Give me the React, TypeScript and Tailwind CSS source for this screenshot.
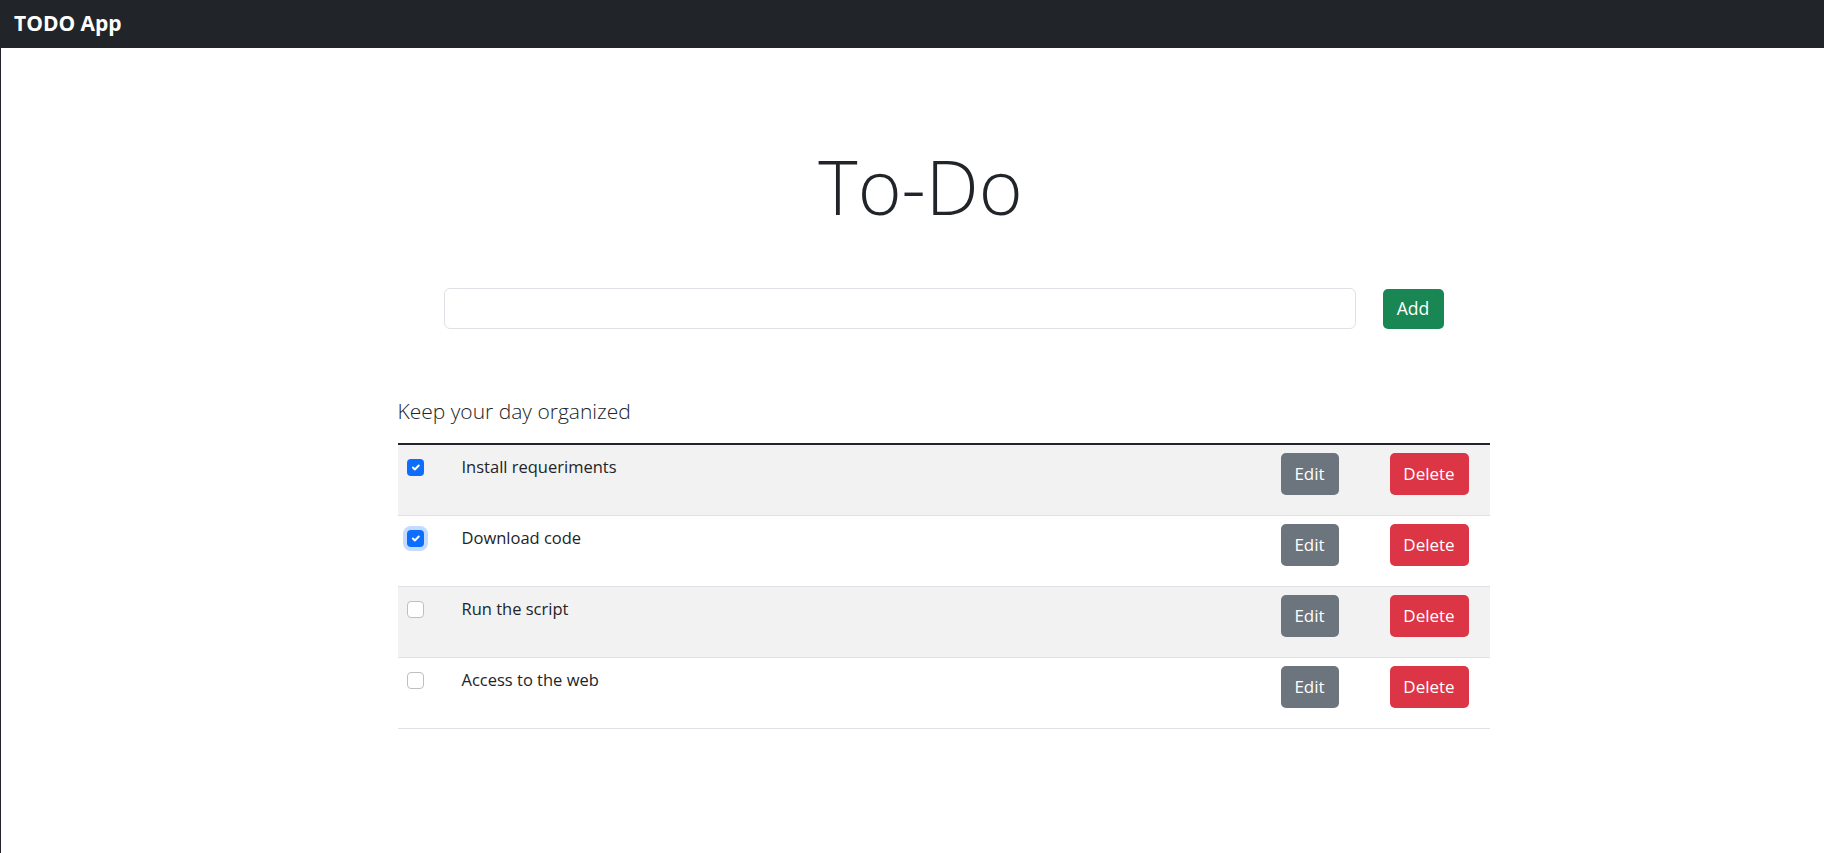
import { useState } from "react";

type Task = { id: number; text: string; done: boolean; focused?: boolean };

const initialTasks: Task[] = [
  { id: 1, text: "Install requeriments", done: true },
  { id: 2, text: "Download code", done: true, focused: true },
  { id: 3, text: "Run the script", done: false },
  { id: 4, text: "Access to the web", done: false },
];

function Check({ checked, focused }: { checked: boolean; focused?: boolean }) {
  if (checked) {
    return (
      <span
        className={
          "mt-[6px] flex h-[17px] w-[17px] items-center justify-center rounded-[4px] bg-[#0d6efd] " +
          (focused ? "shadow-[0_0_0_4px_rgba(13,110,253,0.25)]" : "")
        }
      >
        <svg viewBox="0 0 20 20" className="h-[13px] w-[13px]">
          <path d="M6 10l3 3l6-6" fill="none" stroke="#fff" strokeWidth="3" strokeLinecap="round" strokeLinejoin="round" />
        </svg>
      </span>
    );
  }
  return <span className="mt-[6px] block h-[17px] w-[17px] rounded-[4px] border border-[#bfbfbf] bg-white" />;
}

export default function App() {
  const [tasks] = useState(initialTasks);

  return (
    <div
      className="min-h-screen border-l border-[#212529] bg-white text-[#212529]"
      style={{ fontFamily: '"Open Sans", "Noto Sans", sans-serif' }}
    >
      <nav className="flex h-[48px] items-center bg-[#212529] px-[13px]">
        <span className="text-[21px] font-bold text-white">TODO App</span>
      </nav>

      <div className="flex justify-center pl-[16px] pt-[88px]">
        <h1 className="text-[75px] font-light leading-[100px]">To-Do</h1>
      </div>

      <div className="flex justify-center pl-[62px]">
        <div className="w-[1092px]">
          <div className="mt-[52px] flex items-center gap-[27px] px-[46px]">
            <input className="h-[41px] flex-1 rounded-[6px] border border-[#dee2e6] px-3 outline-none" />
            <button className="h-[40px] w-[61px] rounded-[5px] bg-[#198754] text-[17.6px] text-white">Add</button>
          </div>

          <p className="mt-[67px] text-[21px] font-light leading-[30px] text-[#212529]">Keep your day organized</p>

          <div className="mt-[17px] border-t-2 border-[#212529]">
            {tasks.map((t, i) => (
              <div
                key={t.id}
                className={
                  "grid h-[71px] grid-cols-[64px_1fr_109px_100px] items-start border-b border-[#dee2e6] pt-[8px] " +
                  (i % 2 === 0 ? "bg-[#f2f2f2]" : "bg-white")
                }
              >
                <div className="pl-[9px]">
                  <Check checked={t.done} focused={t.focused} />
                </div>
                <div className="pt-[1px] text-[16.5px] leading-[26px]">{t.text}</div>
                <div>
                  <button className="h-[42px] w-[58px] rounded-[5px] bg-[#6c757d] text-[17px] text-white">Edit</button>
                </div>
                <div>
                  <button className="h-[42px] w-[79px] rounded-[5px] bg-[#dc3545] text-[17px] text-white">Delete</button>
                </div>
              </div>
            ))}
          </div>
        </div>
      </div>
    </div>
  );
}
